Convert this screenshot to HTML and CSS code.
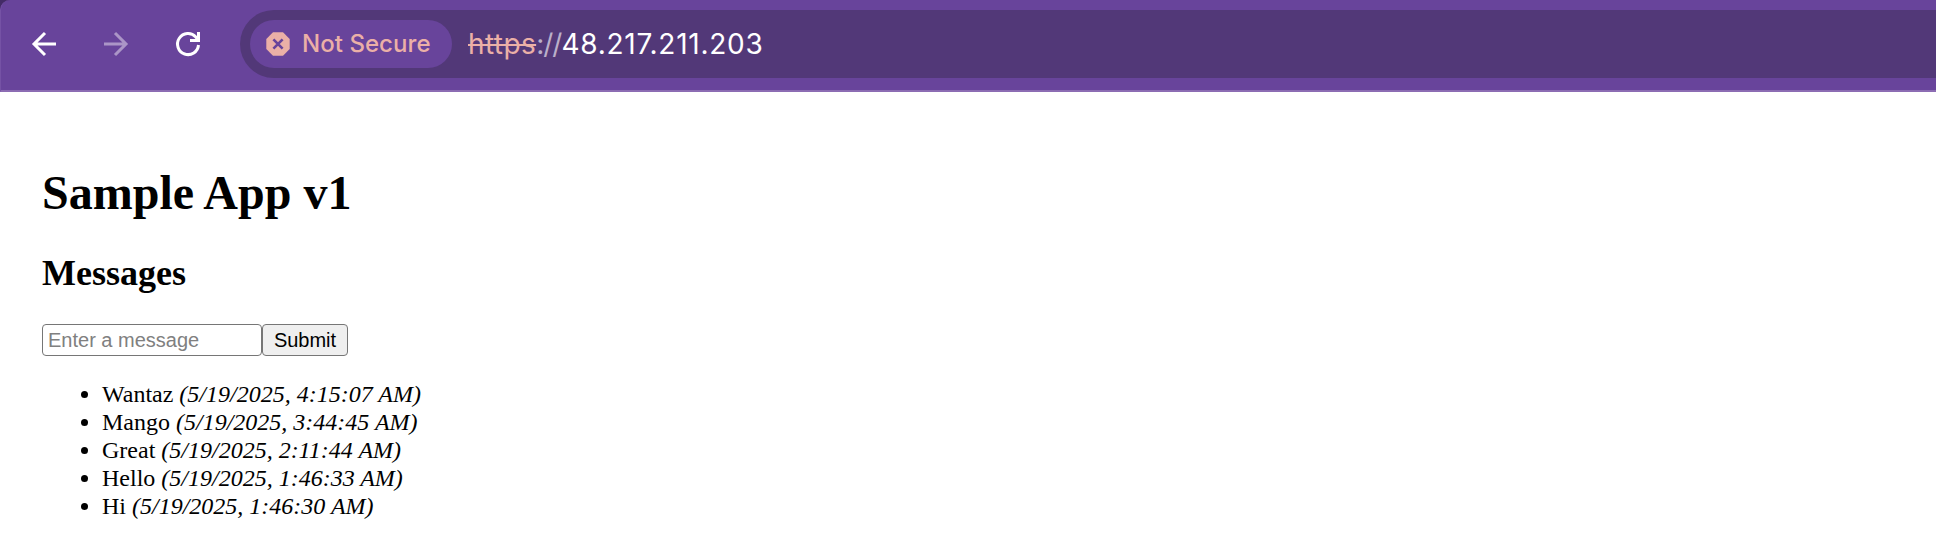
FILE: index.html
```html
<!DOCTYPE html>
<html lang="en">
<head>
<meta charset="utf-8">
<title>Sample App v1</title>
<link rel="stylesheet" href="styles.css">
</head>
<body>
<div class="frame">
<header class="toolbar">
  <nav class="nav">
    <svg class="icon" viewBox="0 0 24 24"><path d="M24 12H2M13 1L2 12L13 23"/></svg>
    <svg class="icon disabled" viewBox="0 0 24 24"><path d="M0 12H22M11 1L22 12L11 23"/></svg>
    <svg class="icon reload" viewBox="0 0 24 24"><path d="M22.5 13A10.5 10.5 0 1 1 19.8 5L22.2 8M22.5 0V8.5H14"/></svg>
  </nav>
  <div class="omnibox">
    <div class="chip">
      <svg class="warning" viewBox="0 0 24 24"><path class="octagon" d="M7 .3H17L23.7 7V17L17 23.7H7L.3 17V7Z"/><path class="cross" d="M7.4 7.4L16.6 16.6M16.6 7.4L7.4 16.6"/></svg>
      <span class="label">Not Secure</span>
    </div>
    <div class="url"><span class="scheme">https</span><span class="separator">://</span><span class="host">48.217.211.203</span></div>
  </div>
</header>
</div>
<main class="page">
  <h1>Sample App v1</h1>
  <h2>Messages</h2>
  <form class="form">
    <input class="message" type="text" placeholder="Enter a message">
    <button class="submit" type="button">Submit</button>
  </form>
  <ul class="list">
    <li>Wantaz <em>(5/19/2025, 4:15:07 AM)</em></li>
    <li>Mango <em>(5/19/2025, 3:44:45 AM)</em></li>
    <li>Great <em>(5/19/2025, 2:11:44 AM)</em></li>
    <li>Hello <em>(5/19/2025, 1:46:33 AM)</em></li>
    <li>Hi <em>(5/19/2025, 1:46:30 AM)</em></li>
  </ul>
</main>
</body>
</html>
```
FILE: styles.css
```css
* { box-sizing: border-box; }
body { margin: 0; background: #fff; overflow: hidden; font: 24px/28px "Liberation Serif", serif; color: #000; }
.frame { background: #432b66; }
.toolbar {
  display: flex; align-items: flex-start; height: 92px; padding-top: 10px;
  background: #68449b; border-bottom: 2px solid #8c6cb3; border-left: 1px solid #7552a5;
  border-top-left-radius: 10px;
}
.nav { display: flex; gap: 48px; padding: 22px 0 0 31px; width: 239px; }
.icon { width: 24px; height: 24px; overflow: visible; fill: none; stroke: #fff; stroke-width: 3; }
.disabled { stroke: #ab95c7; }
.omnibox {
  display: flex; align-items: center; flex: 1; height: 68px; padding-left: 10px;
  background: #523878; border-radius: 34px 0 0 34px;
}
.chip { display: flex; align-items: center; width: 202px; height: 48px; padding-left: 16px; border-radius: 24px; background: #68449b; }
.warning { width: 24px; height: 24px; margin-right: 12px; }
.octagon { fill: #ebb0a7; }
.cross { stroke: #68449b; stroke-width: 2.6; }
.label { font: 500 24px/28px Inter, sans-serif; color: #ebb0a7; letter-spacing: .05px; white-space: nowrap; }
.url { display: flex; padding-left: 16px; font: 400 28px/34px Inter, sans-serif; white-space: nowrap; }
.scheme { color: #ebb0a7; letter-spacing: .4px; text-decoration: line-through; text-decoration-thickness: 2px; }
.separator { color: #baafc9; letter-spacing: -1px; }
.host { color: #fff; letter-spacing: .75px; }
.page { padding: 73px 42px 0; }
h1 { margin: 0; font-size: 48px; line-height: 56px; }
h2 { margin: 32px 0 0; font-size: 36px; line-height: 40px; }
.form { display: flex; margin-top: 31px; height: 32px; }
.message, .submit { font: 20px/24px "Liberation Sans", sans-serif; border: 1px solid #767676; border-radius: 4px; }
.message { width: 220px; padding: 1px 5px; background: #fff; }
.message::placeholder { color: #808080; }
.submit { width: 86px; padding: 0; background: #efefef; color: #000; }
.list { margin: 24px 0 0; padding-left: 60px; }
```
